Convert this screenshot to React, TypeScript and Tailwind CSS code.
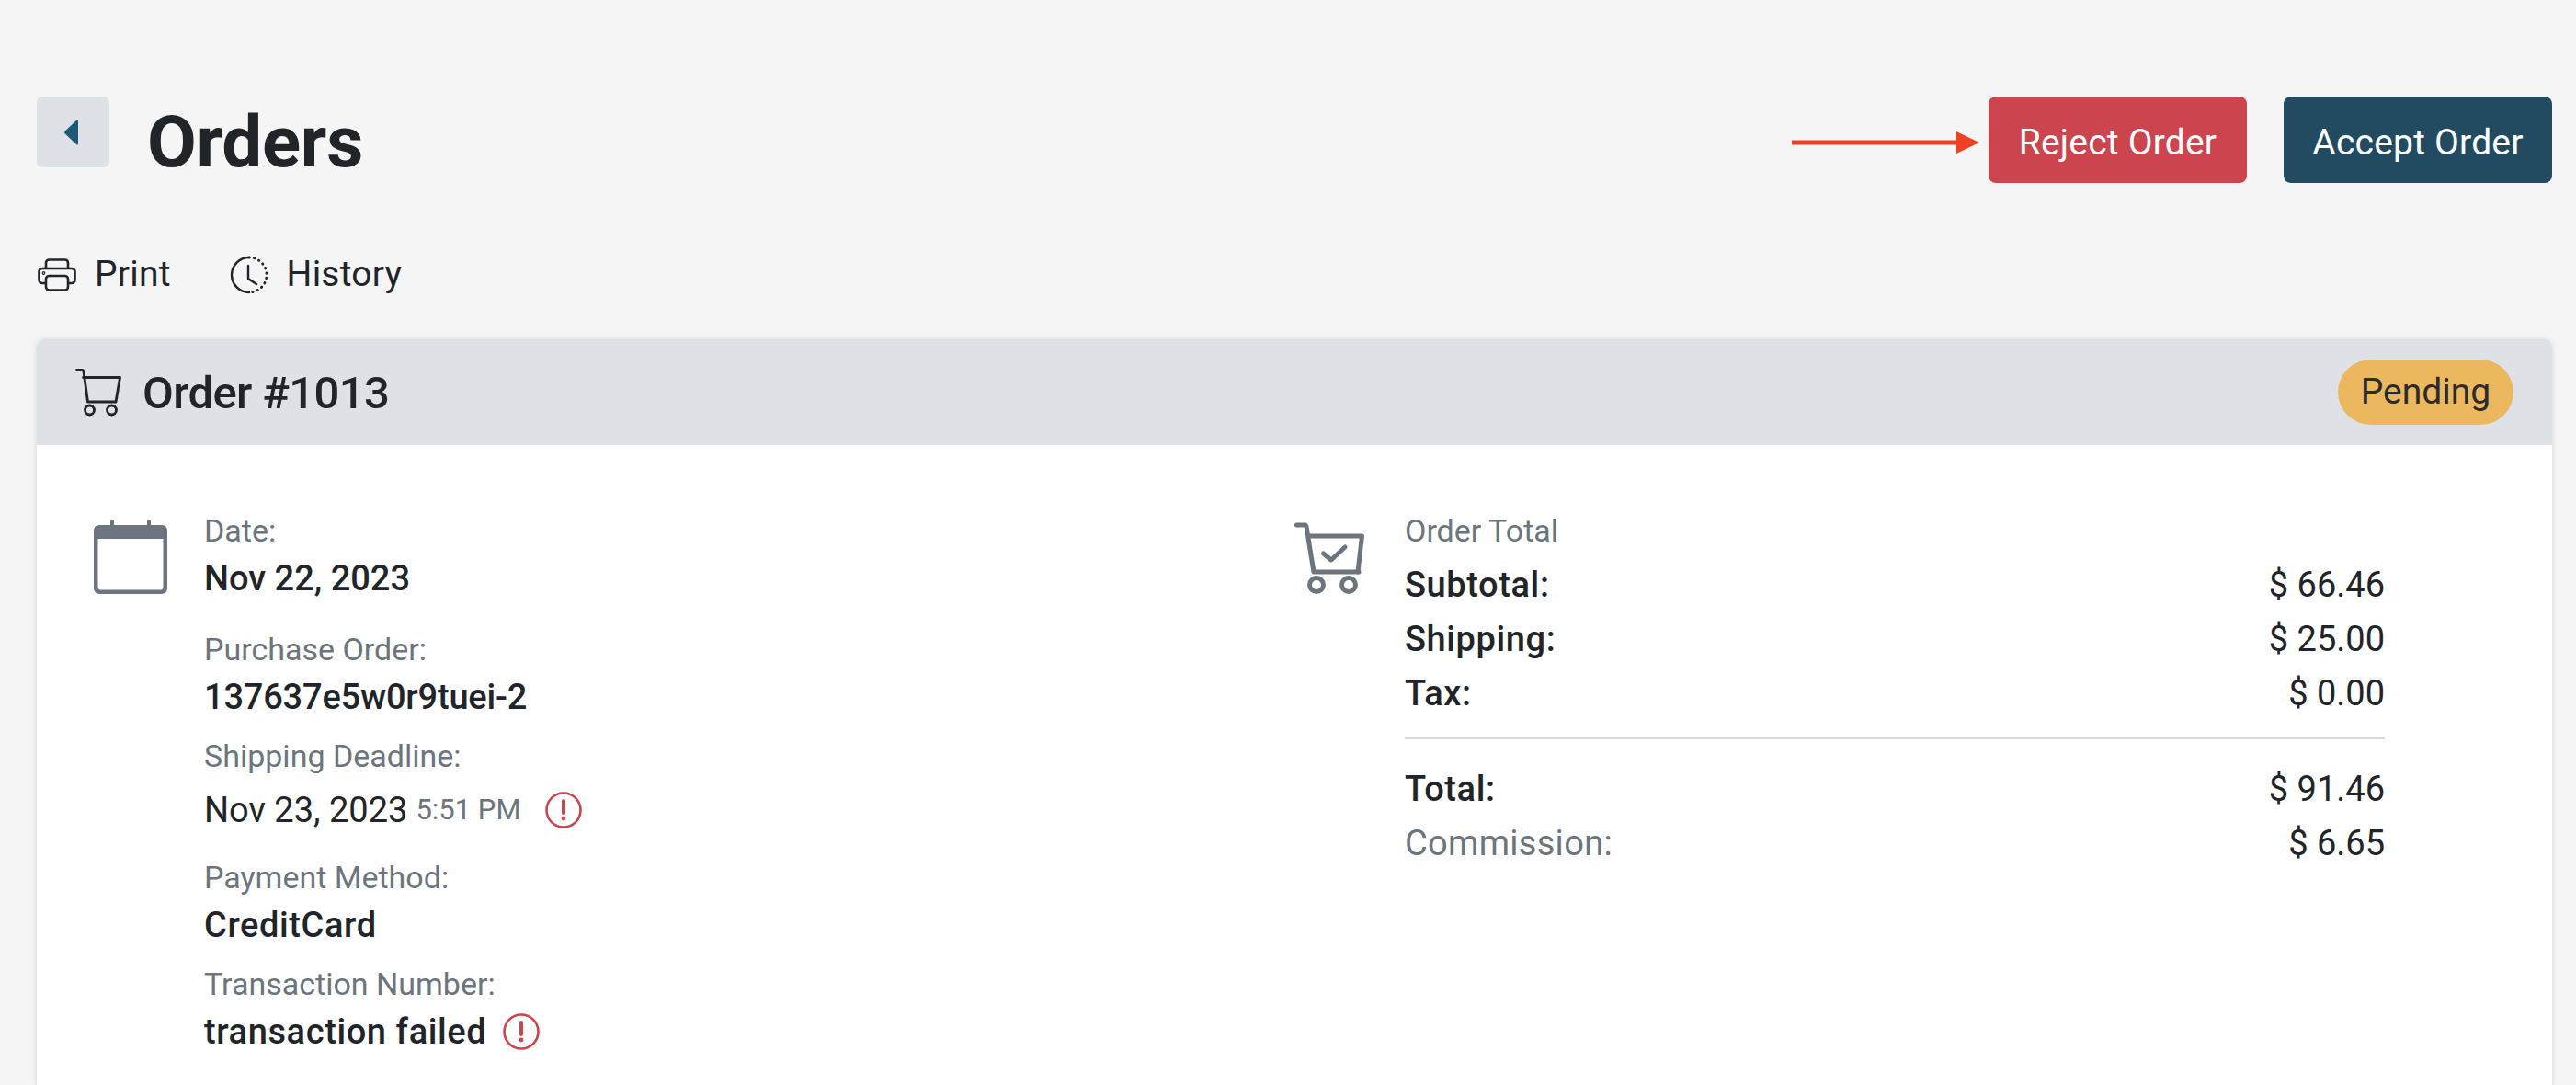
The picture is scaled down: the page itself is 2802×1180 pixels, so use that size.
import React from 'react';

const FONT = 'font-["Roboto","Liberation_Sans",sans-serif]';

function AlertIcon() {
    return (
        <svg width="40" height="40" viewBox="0 0 40 40" fill="none" className="shrink-0">
            <circle cx="20" cy="20" r="18.5" stroke="#cc444d" strokeWidth="2.6" />
            <path d="M20 10v13" stroke="#cc444d" strokeWidth="4" strokeLinecap="round" />
            <circle cx="20" cy="29" r="2.4" fill="#cc444d" />
        </svg>
    );
}

function Label({ children, className = '' }: { children: React.ReactNode; className?: string }) {
    return <div className={`h-[52px] leading-[52px] text-[34px] text-[#6c757d] ${className}`}>{children}</div>;
}

function Value({ children, className = '' }: { children: React.ReactNode; className?: string }) {
    return <div className={`h-[52px] leading-[52px] text-[38px] font-medium text-[#212529] ${className}`}>{children}</div>;
}

function TotalRow({ label, amount, muted, className = '' }: { label: string; amount: string; muted?: boolean; className?: string }) {
    return (
        <div className={`flex justify-between h-[59px] leading-[59px] text-[38px] text-[#212529] ${className}`}>
            <span className={muted ? 'text-[#6c757d] tracking-[0.3px]' : 'font-medium tracking-[0.6px]'}>{label}</span>
            <span>{amount}</span>
        </div>
    );
}

export default function App() {
    return (
        <div className={`h-[1180px] overflow-hidden bg-[#f5f5f5] pl-[40px] pr-[26px] pt-[105px] ${FONT}`}>
            {/* Page header */}
            <div className="flex items-start justify-between h-[95px]">
                <div className="flex items-start">
                    <button className="w-[79px] h-[77px] rounded-[6px] bg-[#dee2e6] flex items-center justify-center">
                        <svg width="18" height="28" viewBox="0 0 18 28" className="-ml-[4px]">
                            <path d="M16 1.5v25a1 1 0 0 1-1.7.7L1.5 15.2a1.8 1.8 0 0 1 0-2.4L14.3.8A1 1 0 0 1 16 1.5z" fill="#1f5876" />
                        </svg>
                    </button>
                    <h1 className="ml-[41px] h-[100px] leading-[100px] text-[78px] font-bold text-[#212529] tracking-[-0.2px]">Orders</h1>
                </div>
                <div className="flex items-center">
                    <svg width="204" height="26" viewBox="0 0 204 26" className="mr-[10px] mt-[5px]">
                        <path d="M0 10.5h179v5H0z" fill="#ee4123" />
                        <path d="M179 1l25 12-25 12z" fill="#ee4123" />
                    </svg>
                    <button className="w-[281px] h-[94px] pt-[6px] rounded-[8px] bg-[#cc444d] text-white text-[39px] tracking-[0.2px]">Reject Order</button>
                    <button className="ml-[40px] w-[292px] h-[94px] pt-[6px] rounded-[8px] bg-[#224b62] text-white text-[39px] tracking-[0.2px]">Accept Order</button>
                </div>
            </div>

            {/* Actions */}
            <div className="flex items-center h-[169px] pt-[28px] text-[39px] text-[#212529]">
                <svg width="42" height="36" viewBox="0 0 42 36" fill="none" stroke="#212529" strokeWidth="2.6" strokeLinejoin="round" className="ml-[1px]">
                    <path d="M9 11V5a3.5 3.5 0 0 1 3.5-3.5h17A3.5 3.5 0 0 1 33 5v6" />
                    <path d="M9 27H5a3.5 3.5 0 0 1-3.5-3.5V14.5A3.5 3.5 0 0 1 5 11h32a3.5 3.5 0 0 1 3.5 3.5v9A3.5 3.5 0 0 1 37 27h-4" />
                    <rect x="9" y="19" width="24" height="15.5" rx="3.5" />
                    <circle cx="6.5" cy="16" r="0.6" />
                </svg>
                <span className="ml-[20px] tracking-[0.2px]">Print</span>
                <svg width="42" height="42" viewBox="0 0 42 42" fill="none" stroke="#212529" strokeWidth="2.4" strokeLinecap="round" className="ml-[64px]">
                    <path d="M21 40A19 19 0 1 1 21 2" />
                    <path d="M21 2A19 19 0 0 1 21 40" strokeDasharray="0.5 5" strokeWidth="2.8" />
                    <path d="M20 11v14l9 6" />
                </svg>
                <span className="ml-[20px] tracking-[0.2px]">History</span>
            </div>

            {/* Order card */}
            <div className="rounded-t-[8px] bg-white shadow-[0_0_6px_rgba(0,0,0,0.12)]">
                <div className="flex items-center justify-between h-[115px] rounded-t-[8px] bg-[#dee2e6] pl-[42px] pr-[42px]">
                    <div className="flex items-center">
                        <svg width="50" height="52" viewBox="0 0 50 52" fill="none" stroke="#212529" strokeWidth="2.8" strokeLinecap="round" strokeLinejoin="round">
                            <path d="M1.5 1.5h5.5a2 2 0 0 1 2 1.7L13.5 36h30" />
                            <path d="M8.500 9.500h40L44 36" />
                            <circle cx="15.500" cy="45" r="5" />
                            <circle cx="39.500" cy="45" r="5" />
                        </svg>
                        <span className="ml-[23px] pt-[2px] text-[49px] font-medium text-[#212529] tracking-[-0.6px]">Order #1013</span>
                    </div>
                    <span className="w-[191px] h-[71px] rounded-full bg-[#ebb85f] flex items-center justify-center text-[39px] text-[#2b2b2b]">Pending</span>
                </div>

                <div className="flex pt-[67px] h-[700px]">
                    {/* Order details */}
                    <div className="flex w-[1368px] pl-[62px]">
                        <svg width="80" height="80" viewBox="0 0 80 82" preserveAspectRatio="none" className="mt-[15px] shrink-0">
                            <path d="M6 5h12V1.500a2 2 0 0 1 4 0V5h36V1.500a2 2 0 0 1 4 0V5h12a6 6 0 0 1 6 6v65a6 6 0 0 1-6 6H6a6 6 0 0 1-6-6V11a6 6 0 0 1 6-6zm-1.500 15.500V74a3.500 3.500 0 0 0 3.500 3.500h64a3.500 3.500 0 0 0 3.500-3.500V20.500z" fill="#6c757d" fillRule="evenodd" />
                        </svg>
                        <div className="ml-[40px]">
                            <Label>Date:</Label>
                            <Value>Nov 22, 2023</Value>
                            <Label className="mt-[25px]">Purchase Order:</Label>
                            <Value className="tracking-[-0.2px]">137637e5w0r9tuei-2</Value>
                            <Label className="mt-[12px]">Shipping Deadline:</Label>
                            <Value className="mt-[7px] flex items-center !font-normal">
                                <span>Nov 23, 2023</span>
                                <span className="ml-[9px] text-[31px] text-[#6c757d]">5:51 PM</span>
                                <span className="ml-[27px]"><AlertIcon /></span>
                            </Value>
                            <Label className="mt-[21px]">Payment Method:</Label>
                            <Value className="tracking-[0.6px]">CreditCard</Value>
                            <Label className="mt-[12px]">Transaction Number:</Label>
                            <Value className="flex items-center tracking-[0.6px]">
                                <span>transaction failed</span>
                                <span className="ml-[18px]"><AlertIcon /></span>
                            </Value>
                        </div>
                    </div>

                    {/* Order total */}
                    <div className="flex flex-1 pr-[182px]">
                        <svg width="76" height="78" viewBox="0 0 76 78" fill="none" stroke="#6c757d" strokeWidth="5" strokeLinecap="round" strokeLinejoin="round" className="mt-[17px] shrink-0">
                            <path d="M2.500 3h8.500a2 2 0 0 1 2 1.700L21 54h49" />
                            <path d="M16 15h57.500L69 54" />
                            <path d="M31.500 34l8.500 7 15-14" />
                            <circle cx="24" cy="68" r="7.500" />
                            <circle cx="59" cy="68" r="7.500" />
                        </svg>
                        <div className="ml-[44px] flex-1">
                            <Label>Order Total</Label>
                            <div className="mt-[4px]">
                                <TotalRow label="Subtotal:" amount="$ 66.46" />
                                <TotalRow label="Shipping:" amount="$ 25.00" />
                                <TotalRow label="Tax:" amount="$ 0.00" />
                            </div>
                            <div className="h-[2px] bg-[#d5d7d9] mt-[18px] mb-[25px]" />
                            <TotalRow label="Total:" amount="$ 91.46" />
                            <TotalRow label="Commission:" amount="$ 6.65" muted />
                        </div>
                    </div>
                </div>
            </div>
        </div>
    );
}
